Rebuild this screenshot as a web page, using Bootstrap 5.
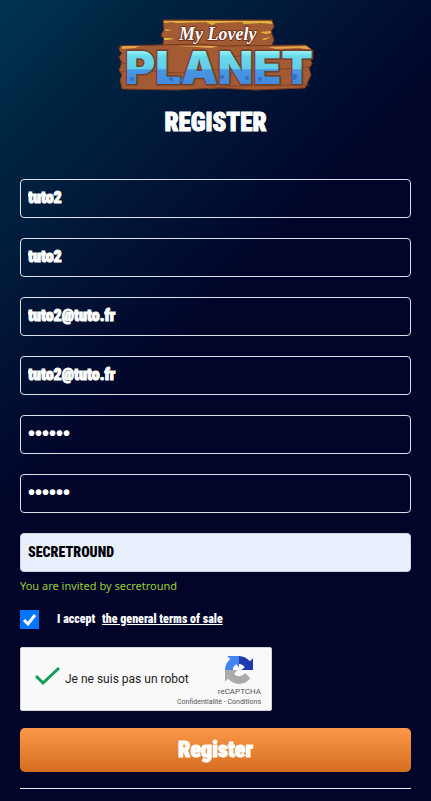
<!DOCTYPE html>
<html lang="en">
<head>
<meta charset="utf-8">
<meta name="viewport" content="width=device-width, initial-scale=1">
<title>Register - My Lovely Planet</title>
<link href="https://cdn.jsdelivr.net/npm/bootstrap@5.3.0/dist/css/bootstrap.min.css" rel="stylesheet">
<style>
  body {
    min-height: 100vh;
    color: #fff;
    font-family: "Roboto Condensed", Lato, "Liberation Sans", sans-serif;
    background: #02042a linear-gradient(135deg, #00344f 0%, #00203f 17%, #02042a 43%) no-repeat;
  }
  .register-page { padding: 19px 20px 12px; }
  .brand-logo { width: 196px; height: 72px; overflow: visible; }
  .page-title { font-size: 25px; line-height: 30px; margin: 17px 0 41px; font-weight: 900; -webkit-text-stroke: 1px #fff; }
  .fields { gap: 20px; }
  .field {
    height: 39px; padding: 4px 7px 6px; border: 1px solid #dee2e6; border-radius: 4px;
    background: transparent; color: #fff; font-size: 16px; font-weight: 900;
    -webkit-text-stroke: 1px currentColor;
  }
  .field:focus { background: transparent; color: #fff; }
  .field-filled, .field-filled:focus { background: #e8f0fe; color: #000; border-color: #ced4da; font-size: 14px; -webkit-text-stroke-width: 0; }
  .field[type=password] { font-family: "Liberation Sans", sans-serif; font-size: 20px; -webkit-text-stroke-width: 0; }
  .invite { color: #9acd32; font: 11px/18px "Noto Sans", sans-serif; margin: 5px 0 15px; }
  .terms { gap: 18px; font-size: 12px; line-height: 19px; font-weight: 900; }
  .terms-box { width: 19px; height: 19px; margin: 0; border: 0; }
  .terms-box.form-check-input[type=checkbox] { border-radius: 0; }
  .terms-box:checked {
    background-color: #0075ff; background-size: 19px;
  }
  .terms-box.form-check-input:checked[type=checkbox] {
    background-image: url("data:image/svg+xml,%3Csvg xmlns='http://www.w3.org/2000/svg' viewBox='0 0 19 19'%3E%3Cpath d='M4 10l4 4 7-9' fill='none' stroke='white' stroke-width='3'/%3E%3C/svg%3E");
  }
  .terms a { margin-left: 4px; }
  .captcha {
    width: 252px; max-width: 100%; height: 64px; margin: 18px 0 17px; padding: 0 10px 0 14px;
    background: #f9f9f9; color: #222; border: 1px solid #d3d3d3; border-radius: 2px;
    font-family: Roboto, sans-serif; font-size: 12px;
  }
  .captcha-label { margin-left: 4px; width: 0; }
  .captcha-brand { margin-left: auto; padding-top: 8px; color: #555; font-size: 8px; line-height: 16px; }
  .captcha-brand a { color: #555; }
  .captcha-links { font-size: 7px; line-height: 4px; }
  .submit-btn, .submit-btn:hover {
    height: 44px; padding: 0; border: 0; border-radius: 5px; color: #fff; font-size: 22px; line-height: 42px; font-weight: 900;
    -webkit-text-stroke: 1px #fff; background: linear-gradient(#fb9749, #d56e20);
  }
  .divider { margin: 16px 0 0; border-color: #fff; opacity: .95; }
</style>
</head>
<body>
<main class="register-page container-fluid">
  <header class="text-center">
    <svg class="brand-logo d-block mx-auto" viewBox="0 0 196 72" role="img" aria-label="My Lovely Planet">
      <defs>
        <linearGradient id="water" x1="0" y1="31" x2="0" y2="64" gradientUnits="userSpaceOnUse">
          <stop offset="0" stop-color="#9bf8f8"/><stop offset=".2" stop-color="#68d8ec"/>
          <stop offset=".56" stop-color="#62cee8"/><stop offset=".6" stop-color="#4799e5"/><stop offset="1" stop-color="#438bdc"/>
        </linearGradient>
      </defs>
      <path d="M45 1L154 1 156 8 153 12 156 21 153 28 44 30 46 20 43 16 46 11z" fill="#a45a32" stroke="#74391f"/>
      <path d="M46 2H153L155 5 142 4 126 5 124 3 98 4 94 6 88 3 58 4 54 3 46 4zM46 10L54 11 49 12zM46 19L53 19 56 20 50 21 46 21zM143 20L153 18 147 21zM142 13L153 12 153 14 147 15z" fill="#dfb542"/>
      <path d="M2 27L80 25 105 27 188 26 195 32 192 39 194 45 191 49 193 56 187 69 138 71 100 69 58 71 4 70 2 61 4 56 1 51 4 44 1 38 4 34 1 31z" fill="#a45a32" stroke="#74391f"/>
      <path d="M4 27L22 27 17 29 4 30zM58 27L100 27 94 29 78 28zM150 28L188 27 194 31 181 29 158 30z" fill="#dfa64b"/>
      <path d="M3 53L18 51 60 54 91 49 112 54 142 52 191 48M90 70L118 67 191 66M2 45L10 44M110 38L140 36 192 41" fill="none" stroke="#864524"/>
      <text x="7" y="65" font-family="Inter, sans-serif" font-weight="900" font-size="46" fill="url(#water)" stroke="#70402d" stroke-width="3" paint-order="stroke" stroke-linejoin="round">PLANET</text>
      <g fill="#326fc6"><circle cx="14" cy="60" r="2"/><circle cx="53" cy="60" r="2"/><circle cx="64" cy="61" r="2"/><circle cx="104" cy="58" r="2"/><circle cx="129" cy="59" r="2"/><circle cx="142" cy="60" r="2"/><circle cx="176" cy="58" r="3"/></g>
      <text x="61" y="21" font-family="Liberation Serif, serif" font-style="italic" font-weight="700" font-size="18" fill="#fff" stroke="#70351f" stroke-width="2" paint-order="stroke">My Lovely</text>
    </svg>
    <h1 class="page-title">REGISTER</h1>
  </header>
  <form>
    <div class="fields d-flex flex-column">
      <input class="field form-control" type="text" aria-label="Username" value="tuto2">
      <input class="field form-control" type="text" aria-label="Confirm username" value="tuto2">
      <input class="field form-control" type="email" aria-label="Email" value="tuto2@tuto.fr">
      <input class="field form-control" type="email" aria-label="Confirm email" value="tuto2@tuto.fr">
      <input class="field form-control" type="password" aria-label="Password" value="secret">
      <input class="field form-control" type="password" aria-label="Confirm password" value="secret">
      <input class="field field-filled form-control" type="text" aria-label="Invitation code" value="SECRETROUND">
    </div>
    <p class="invite">You are invited by secretround</p>
    <div class="terms d-flex align-items-center">
      <input class="terms-box form-check-input" type="checkbox" id="terms" checked>
      <div><label for="terms">I accept</label> <a class="text-white" href="#">the general terms of sale</a></div>
    </div>
    <div class="captcha d-flex">
      <button class="btn p-0 border-0 align-self-center" type="button" aria-label="Verified">
        <svg class="d-block" width="26" height="26" viewBox="0 0 26 26" fill="none" stroke="#0f9d58" stroke-width="3"><path d="M1 10L8 17 24 2"/></svg>
      </button>
      <span class="captcha-label align-self-center text-nowrap">Je ne suis pas un robot</span>
      <div class="captcha-brand d-flex flex-column align-items-end">
        <svg class="me-2" width="28" height="28" viewBox="0 0 64 64" aria-hidden="true">
          <path fill="#1c3aa9" d="M64 32V5l-7 7C51 5 42 0 32 0v18c6 0 11 3 13 8l-8 6z"/>
          <path fill="#4285f4" d="M32 0H5l7 7C5 13 0 22 0 32h18c0-6 3-11 8-13l6 8z"/>
          <path fill="#ababab" d="M0 32v27l7-7c6 7 15 12 25 12 11 0 20-5 26-13L46 39c-3 4-8 7-14 7-6 0-9-2-11-6l8-8z"/>
        </svg>
        <span>reCAPTCHA</span>
        <span class="captcha-links text-nowrap"><a class="text-decoration-none" href="#">Confidentialité</a> - <a class="text-decoration-none" href="#">Conditions</a></span>
      </div>
    </div>
    <button class="submit-btn btn w-100" type="submit">Register</button>
  </form>
  <hr class="divider">
</main>
<script src="https://cdn.jsdelivr.net/npm/bootstrap@5.3.0/dist/js/bootstrap.bundle.min.js"></script>
</body>
</html>
